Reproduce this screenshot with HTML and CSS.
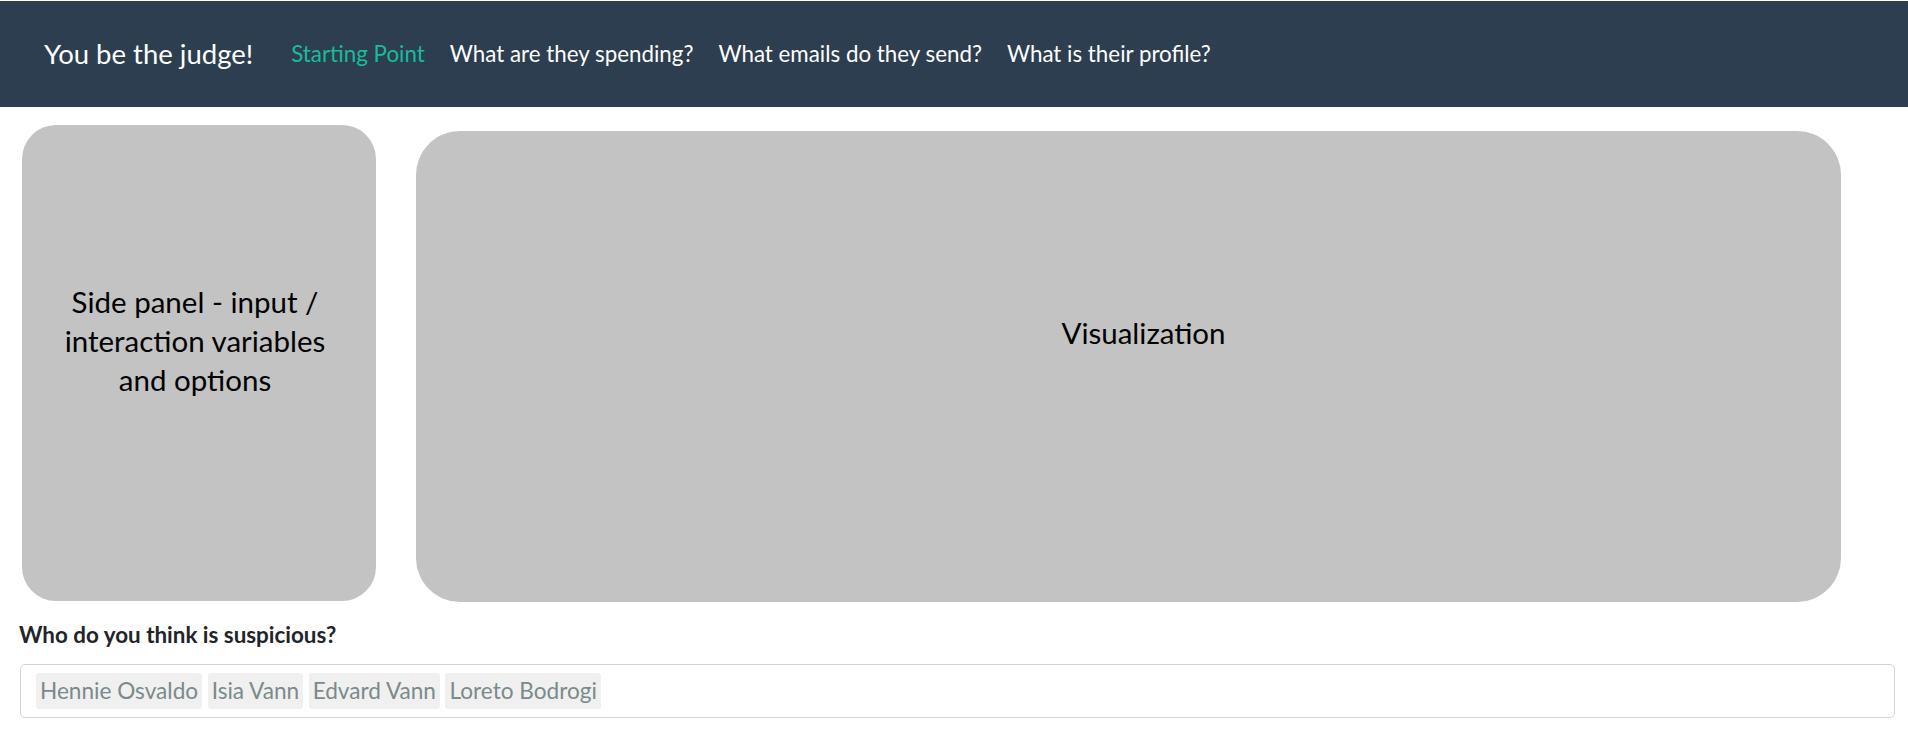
FILE: index.html
```html
<!DOCTYPE html>
<html lang="en">
<head>
<meta charset="utf-8">
<title>You be the judge!</title>
<link rel="stylesheet" href="styles.css">
</head>
<body>
<nav class="navbar">
  <a class="brand" href="#">You be the judge!</a>
  <ul class="nav">
    <li><a class="nav-link active" href="#">Starting Point</a></li>
    <li><a class="nav-link" href="#">What are they spending?</a></li>
    <li><a class="nav-link" href="#">What emails do they send?</a></li>
    <li><a class="nav-link" href="#">What is their profile?</a></li>
  </ul>
</nav>
<main class="content">
  <div class="panels">
    <div class="panel side-panel"><span>Side panel - input /<br>interaction variables<br>and options</span></div>
    <div class="panel viz-panel"><span>Visualization</span></div>
  </div>
  <div class="form-group">
    <label class="form-label">Who do you think is suspicious?</label>
    <div class="tag-input">
      <span class="tag">Hennie Osvaldo</span>
      <span class="tag">Isia Vann</span>
      <span class="tag">Edvard Vann</span>
      <span class="tag">Loreto Bodrogi</span>
    </div>
  </div>
</main>
</body>
</html>
```

FILE: styles.css
```css
* { box-sizing: border-box; }
html, body { margin: 0; padding: 0; background: #fff; }
body {
  font-family: Lato, "Liberation Sans", sans-serif;
  color: #212529;
}
.navbar {
  margin-top: 1px;
  height: 106px;
  background: #2c3e50;
  display: flex;
  align-items: center;
  padding-left: 44px;
}
.brand {
  color: #fff;
  text-decoration: none;
  font-size: 27.5px;
  line-height: 36px;
  margin-right: 25.5px;
}
.nav {
  list-style: none;
  margin: 0;
  padding: 0;
  display: flex;
}
.nav-link {
  display: block;
  color: #fff;
  text-decoration: none;
  font-size: 22.35px;
  line-height: 30px;
  padding: 0 12.5px;
}
.nav-link.active { color: #18bc9c; }
.panels {
  display: flex;
  align-items: flex-start;
  padding-left: 22px;
  gap: 40px;
}
.panel {
  background: #c3c3c3;
  color: #000;
  display: flex;
  align-items: center;
  justify-content: center;
  text-align: center;
  font-family: Lato, "Open Sans", sans-serif;
  font-size: 29.5px;
  line-height: 39px;
}
.side-panel {
  width: 354px;
  height: 476px;
  margin-top: 18px;
  border-radius: 34px;
  padding-bottom: 46px;
  padding-right: 8px;
}
.viz-panel {
  width: 1425px;
  height: 471px;
  margin-top: 24px;
  border-radius: 44px;
  padding-bottom: 69px;
  padding-left: 30px;
}
.form-group {
  margin: 20px 13px 0 20px;
}
.form-label {
  display: block;
  font-weight: 700;
  font-size: 22.4px;
  line-height: 25px;
  margin-bottom: 17px;
  margin-left: -1px;
}
.tag-input {
  height: 54px;
  border: 1px solid #d4d4d4;
  border-radius: 5px;
  padding: 8px 15px;
  display: flex;
  gap: 5.5px;
}
.tag {
  background: #f0f0f0;
  color: #7b8a8b;
  font-size: 22.6px;
  line-height: 36px;
  height: 36px;
  padding: 0 4px;
  border-radius: 3px;
}
```
